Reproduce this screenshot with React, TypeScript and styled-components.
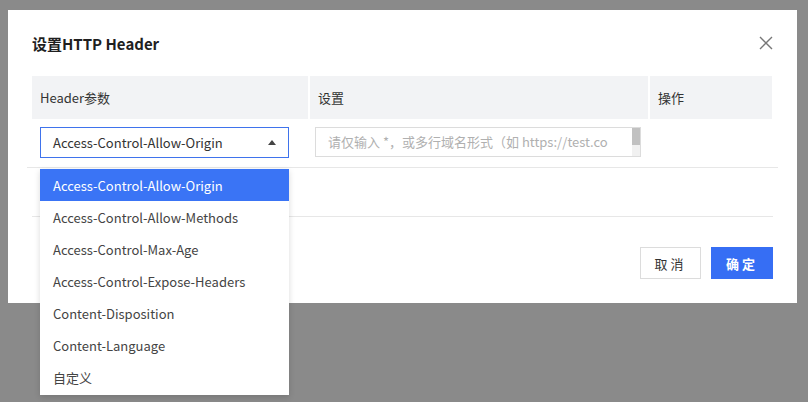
import React from 'react';
import styled, { createGlobalStyle } from 'styled-components';

const Global = createGlobalStyle`
  html, body { margin: 0; padding: 0; }
  body { font-family: "Noto Sans CJK SC", "Liberation Sans", sans-serif; background: #888; width: 808px; height: 402px; overflow: hidden; }
`;

const Overlay = styled.div`
  position: relative;
  width: 808px;
  height: 402px;
  background: #8a8a8a;
`;

const Modal = styled.div`
  position: absolute;
  left: 8px;
  top: 10px;
  width: 789px;
  height: 293px;
  background: #fff;
  box-sizing: border-box;
  padding: 22px 24px 0 24px;
  display: flex;
  flex-direction: column;
`;

const Head = styled.div`
  display: flex;
  justify-content: space-between;
  align-items: center;
  height: 22px;
  font-size: 15px;
  font-weight: 700;
  color: #1f1f1f;
`;

const Close = styled.svg`
  width: 14px;
  height: 14px;
  margin-right: 0;
`;

const Table = styled.div`
  margin-top: 22px;
  display: grid;
  grid-template-columns: 276px 338px 122px;
  column-gap: 2px;
  width: 740px;
`;

const Th = styled.div`
  background: #f2f3f5;
  height: 43px;
  display: flex;
  align-items: center;
  padding-left: 8px;
  font-size: 13px;
  color: #333;
`;

const Row = styled.div`
  display: flex;
  align-items: flex-start;
  margin: 0 -5px;
  padding: 8px 0 0 13px;
  height: 40px;
  border-bottom: 1px solid #e7e7e7;
`;

const Select = styled.div`
  width: 249px;
  height: 31px;
  box-sizing: border-box;
  border: 1px solid #3f73ec;
  display: flex;
  align-items: center;
  justify-content: space-between;
  padding: 0 12px;
  font-size: 13px;
  color: #333;
`;

const Caret = styled.span`
  width: 0;
  height: 0;
  border-left: 4px solid transparent;
  border-right: 4px solid transparent;
  border-bottom: 5px solid #444;
`;

const Area = styled.div`
  margin-left: 26px;
  width: 326px;
  height: 30px;
  box-sizing: border-box;
  border: 1px solid #dcdcdc;
  display: flex;
  overflow: hidden;
`;

const AreaText = styled.div`
  flex: 1;
  padding: 3px 12px;
  font-size: 13px;
  line-height: 22px;
  color: #b0b0b0;
  white-space: nowrap;
  overflow: hidden;
`;

const Scroll = styled.div`
  width: 8px;
  background: #f1f1f1;
  position: relative;
  &::before {
    content: '';
    display: block;
    height: 17px;
    background: #c1c1c1;
  }
`;

const EmptyRow = styled.div`
  height: 48px;
  border-bottom: 1px solid #e7e7e7;
`;

const Footer = styled.div`
  display: flex;
  justify-content: flex-end;
  gap: 10px;
  margin-top: 30px;
`;

const Btn = styled.button<{ $primary?: boolean }>`
  height: 32px;
  width: ${p => (p.$primary ? 62 : 61)}px;
  border: 1px solid ${p => (p.$primary ? '#366ef4' : '#dcdcdc')};
  background: ${p => (p.$primary ? '#366ef4' : '#fff')};
  color: ${p => (p.$primary ? '#fff' : '#333')};
  font-family: inherit;
  font-size: 13px;
  font-weight: ${p => (p.$primary ? 700 : 400)};
  letter-spacing: 3px;
  padding: 0;
`;

const Menu = styled.div`
  position: absolute;
  left: 40px;
  top: 169px;
  width: 249px;
  background: #fff;
  box-shadow: 0 2px 6px rgba(0, 0, 0, 0.15);
  padding-bottom: 2px;
`;

const Item = styled.div<{ $active?: boolean }>`
  height: 32px;
  display: flex;
  align-items: center;
  padding-left: 13px;
  font-size: 13px;
  background: ${p => (p.$active ? '#3a74f5' : '#fff')};
  color: ${p => (p.$active ? '#fff' : '#444')};
`;

const items = [
  'Access-Control-Allow-Origin',
  'Access-Control-Allow-Methods',
  'Access-Control-Max-Age',
  'Access-Control-Expose-Headers',
  'Content-Disposition',
  'Content-Language',
  '自定义',
];

export default function App() {
  return (
    <Overlay>
      <Global />
      <Modal>
        <Head>
          设置HTTP Header
          <Close viewBox="0 0 14 14">
            <path d="M1 1L13 13M13 1L1 13" stroke="#777" strokeWidth="1.4" />
          </Close>
        </Head>
        <Table>
          <Th>Header参数</Th>
          <Th>设置</Th>
          <Th>操作</Th>
        </Table>
        <Row>
          <Select>
            Access-Control-Allow-Origin
            <Caret />
          </Select>
          <Area>
            <AreaText>请仅输入 *，或多行域名形式（如 https://test.co</AreaText>
            <Scroll />
          </Area>
        </Row>
        <EmptyRow />
        <Footer>
          <Btn>取消</Btn>
          <Btn $primary>确定</Btn>
        </Footer>
      </Modal>
      <Menu>
        {items.map((t, i) => (
          <Item key={t} $active={i === 0}>{t}</Item>
        ))}
      </Menu>
    </Overlay>
  );
}
